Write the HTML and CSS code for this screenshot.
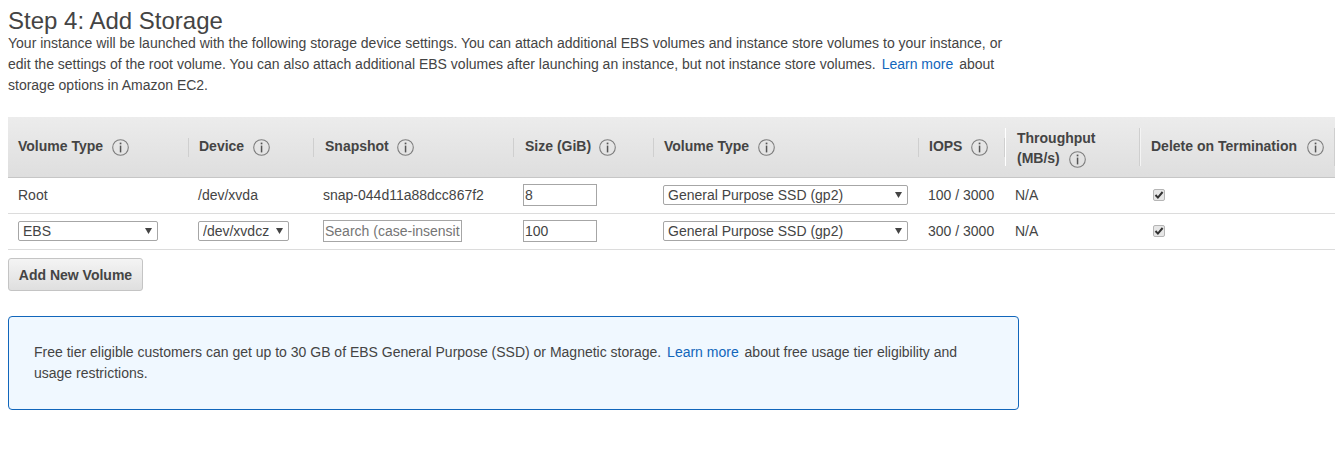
FILE: index.html
```html
<!DOCTYPE html>
<html>
<head><title>Step 4: Add Storage</title>
<meta charset="utf-8"/>
<link rel="stylesheet" href="styles.css">
</head>
<body>
<svg class="icon-defs" width="0" height="0">
  <symbol id="info" viewBox="0 0 17 17">
    <circle cx="8.5" cy="8.5" r="7.8" fill="none" stroke="#7d7d7d" stroke-width="1.1"/>
    <rect x="7.7" y="3.6" width="1.7" height="1.7" fill="#555"/>
    <rect x="7.8" y="6.6" width="1.5" height="6.8" fill="#555"/>
  </symbol>
</svg>

<div class="intro">
  <h1 class="title">Step 4: Add Storage</h1>
  <p class="desc">Your instance will be launched with the following storage device settings. You can attach additional EBS volumes and instance store volumes to your instance, or edit the settings of the root volume. You can also attach additional EBS volumes after launching an instance, but not instance store volumes. <a href="#">Learn more</a> about storage options in Amazon EC2.</p>
</div>

<table class="volumes">
  <colgroup>
    <col class="c-type"><col class="c-device"><col class="c-snap"><col class="c-size">
    <col class="c-vtype"><col class="c-iops"><col class="c-through"><col class="c-delete">
  </colgroup>
  <thead>
    <tr>
      <th><div class="head">Volume Type <svg class="info"><use href="#info"/></svg></div></th>
      <th><div class="head">Device <svg class="info"><use href="#info"/></svg></div></th>
      <th><div class="head inset">Snapshot <svg class="info"><use href="#info"/></svg></div></th>
      <th><div class="head inset">Size (GiB) <svg class="info"><use href="#info"/></svg></div></th>
      <th><div class="head">Volume Type <svg class="info"><use href="#info"/></svg></div></th>
      <th><div class="head iops">IOPS <svg class="info"><use href="#info"/></svg></div></th>
      <th><div class="head tall">Throughput (MB/s) <svg class="info"><use href="#info"/></svg></div></th>
      <th><div class="head tall last">Delete on Termination <svg class="info"><use href="#info"/></svg></div></th>
    </tr>
  </thead>
  <tbody>
    <tr>
      <td>Root</td>
      <td>/dev/xvda</td>
      <td>snap-044d11a88dcc867f2</td>
      <td><input class="size" type="text" value="8"></td>
      <td><select class="sel sel-vtype"><option>General Purpose SSD (gp2)</option></select></td>
      <td>100 / 3000</td>
      <td>N/A</td>
      <td><input class="check" type="checkbox" checked></td>
    </tr>
    <tr>
      <td><select class="sel sel-type"><option>EBS</option></select></td>
      <td><select class="sel sel-device"><option>/dev/xvdcz</option></select></td>
      <td><input class="search" type="text" placeholder="Search (case-insensitive)"></td>
      <td><input class="size" type="text" value="100"></td>
      <td><select class="sel sel-vtype"><option>General Purpose SSD (gp2)</option></select></td>
      <td>300 / 3000</td>
      <td>N/A</td>
      <td><input class="check" type="checkbox" checked></td>
    </tr>
  </tbody>
</table>

<button class="add-btn" type="button">Add New Volume</button>

<div class="notice">Free tier eligible customers can get up to 30 GB of EBS General Purpose (SSD) or Magnetic storage. <a href="#">Learn more</a> about free usage tier eligibility and usage restrictions.</div>
</body>
</html>
```

FILE: styles.css
```css
html, body {
    overflow: hidden;
}
body {
    margin: 0;
    padding: 8px 0 0 8px;
    font-family: "Liberation Sans", Arial, sans-serif;
    font-size: 14px;
    color: #444;
    background-color: #fff;
}
a {
    color: #1166bb;
    text-decoration: none;
    margin: 0 2px;
}
.icon-defs {
    display: block;
    height: 0;
}
.intro {
    width: 1005px;
}
.title {
    margin: 0;
    font-size: 24px;
    font-weight: normal;
    line-height: 25px;
}
.desc {
    margin: 0;
    line-height: 21px;
}
.volumes {
    width: 1327px;
    margin-top: 21px;
    table-layout: fixed;
    border-collapse: collapse;
}
.c-type { width: 180px; }
.c-device { width: 125px; }
.c-snap { width: 200px; }
.c-size { width: 140px; }
.c-vtype { width: 265px; }
.c-iops { width: 87px; }
.c-through { width: 134px; }
.c-delete { width: 196px; }

thead tr {
    background: linear-gradient(#ececec, #dedede);
    border-bottom: 1px solid #c6c6c6;
}
th {
    height: 60px;
    padding: 0;
    text-align: left;
    font-size: 14px;
    vertical-align: middle;
}
th:first-child .head {
    border-left: 0;
}
.head {
    height: 17px;
    padding: 0 0 2px 10px;
    border-left: 1px solid #cfcfcf;
    line-height: 17px;
}
.head.inset {
    padding-left: 11px;
}
.head.inset .info {
    margin-left: 4px;
}
.head.iops {
    border-right: 1px solid #cfcfcf;
}
.head.tall {
    height: 38px;
    padding: 0 20px 0 11px;
    line-height: 20px;
    border-left-color: #fff;
}
.head.last {
    box-sizing: border-box;
    padding-right: 0;
    line-height: 36px;
    white-space: nowrap;
    border-left-color: #cfcfcf;
    border-right: 1px solid #cfcfcf;
    box-shadow: inset 1px 0 0 #f4f4f4;
}
.info {
    width: 17px;
    height: 17px;
    margin-left: 5px;
    vertical-align: -5px;
}
.head.last .info {
    margin-left: 6px;
}
td {
    height: 33px;
    padding: 0 0 2px 10px;
    white-space: nowrap;
}
tbody tr {
    border-bottom: 1px solid #dcdcdc;
}
input, select {
    font-family: inherit;
    font-size: 14px;
    color: #444;
    box-sizing: border-box;
    margin: 0;
    vertical-align: middle;
}
.sel {
    appearance: none;
    height: 20px;
    padding: 0 0 0 4px;
    border: 1px solid #a6a6a6;
    border-radius: 2px;
    background: #fff url("data:image/svg+xml,%3Csvg xmlns='http://www.w3.org/2000/svg' width='7' height='6'%3E%3Cpath d='M0 0h7L3.5 6z' fill='%23444'/%3E%3C/svg%3E") no-repeat right 5px center;
}
.sel-type { width: 140px; }
.sel-device { width: 91px; }
.sel-vtype { width: 245px; }
.size {
    width: 74px;
    height: 22px;
    padding: 0 1px;
    border: 1px solid #a6a6a6;
}
.search {
    width: 139px;
    height: 22px;
    padding: 0 1px;
    border: 1px solid #a6a6a6;
}
.search::placeholder {
    color: #757575;
}
.check {
    appearance: none;
    display: block;
    width: 12px;
    height: 12px;
    margin-left: 4px;
    border: 1px solid #b5b5b5;
    border-radius: 2px;
    background: #e6e6e6 url("data:image/svg+xml,%3Csvg xmlns='http://www.w3.org/2000/svg' width='10' height='10'%3E%3Cpath d='M1.5 5l2.4 2.6L8.6 2' fill='none' stroke='%23333' stroke-width='2'/%3E%3C/svg%3E") no-repeat center;
}
.add-btn {
    display: block;
    width: 135px;
    height: 33px;
    margin-top: 8px;
    padding: 0;
    border: 1px solid #c4c4c4;
    border-radius: 3px;
    background: linear-gradient(#f4f4f4, #dfdfdf);
    font-family: inherit;
    font-size: 14px;
    font-weight: bold;
    color: #444;
}
.notice {
    box-sizing: border-box;
    width: 1011px;
    height: 94px;
    margin-top: 25px;
    padding: 25px 25px;
    border: 1px solid #1166bb;
    border-radius: 4px;
    background-color: #f0f8ff;
    line-height: 21px;
}
```
